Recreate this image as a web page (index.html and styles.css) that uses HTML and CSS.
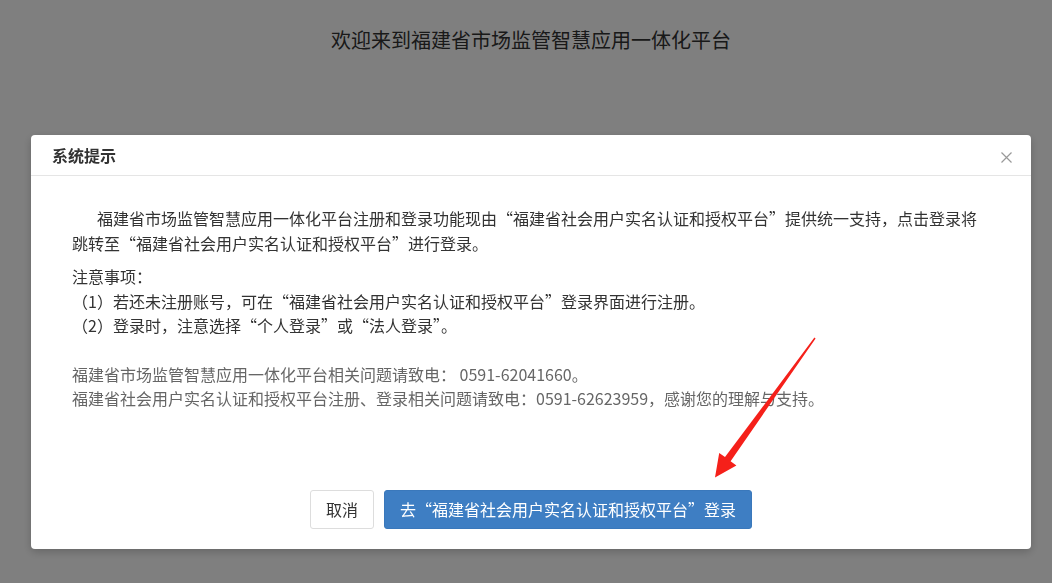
FILE: index.html
```html
<!DOCTYPE html>
<html lang="zh-CN">

<head>
  <meta charset="UTF-8">
  <meta name="viewport" content="width=device-width, initial-scale=1.0">
  <title>福建省市场监管智慧应用一体化平台</title>
  <link rel="stylesheet" href="styles.css">
</head>

<body>
  <div class="page">
    <h1 class="welcome">欢迎来到福建省市场监管智慧应用一体化平台</h1>
  </div>

  <div class="mask">
    <div class="dialog">
      <div class="dialogHead">
        <span class="dialogTitle">系统提示</span>
        <button class="closeBtn" aria-label="关闭">
          <svg width="11" height="11" viewBox="0 0 11 11">
            <path d="M0.5 0.5 L10.5 10.5 M10.5 0.5 L0.5 10.5" stroke="#999" stroke-width="1.2" fill="none" />
          </svg>
        </button>
      </div>
      <div class="dialogBody">
        <p class="intro">福建省市场监管智慧应用一体化平台注册和登录功能现由“福建省社会用户实名认证和授权平台”提供统一支持，点击登录将跳转至“福建省社会用户实名认证和授权平台”进行登录。</p>
        <div class="notes">
          <div>注意事项：</div>
          <div>（1）若还未注册账号，可在“福建省社会用户实名认证和授权平台”登录界面进行注册。</div>
          <div>（2）登录时，注意选择“个人登录”或“法人登录”。</div>
        </div>
        <div class="contact">
          <div>福建省市场监管智慧应用一体化平台相关问题请致电： 0591-62041660。</div>
          <div>福建省社会用户实名认证和授权平台注册、登录相关问题请致电：0591-62623959，感谢您的理解与支持。</div>
        </div>
      </div>
      <div class="dialogFoot">
        <button class="btn btnCancel">取消</button>
        <button class="btn btnPrimary">去“福建省社会用户实名认证和授权平台”登录</button>
      </div>
    </div>
  </div>

  <!-- 标注箭头 -->
  <svg class="arrow" width="1052" height="583" viewBox="0 0 1052 583">
    <polygon points="815.6,338.4 730.6,461.2 736.4,465.4 715,477.5 719.2,452.9 725,457.1 814.4,337.6" fill="#f5201a" />
  </svg>
</body>

</html>
```

FILE: styles.css
```css
body {
  margin: 0;
  background-color: #fff;
  font-family: "Noto Sans CJK SC", "Noto Sans", sans-serif;
  color: #333;
}

.page {
  width: 1000px;
  padding-left: 31px;
  padding-top: 25px;
}

.welcome {
  margin: 0;
  font-size: 20px;
  font-weight: 400;
  line-height: 30px;
  text-align: center;
  color: #333;
}

.mask {
  position: fixed;
  top: 0;
  left: 0;
  width: 100%;
  height: 100%;
  background: rgba(0, 0, 0, 0.5);
}

.dialog {
  width: 1000px;
  margin: 135px 0 0 31px;
  background: #fff;
  border-radius: 4px;
  box-shadow: 0 3px 9px rgba(0, 0, 0, 0.2);
}

.dialogHead {
  height: 40px;
  padding: 0 19px 0 21px;
  display: flex;
  align-items: center;
  justify-content: space-between;
  border-bottom: 1px solid #e5e5e5;
}

.dialogTitle {
  font-size: 16px;
  font-weight: 700;
  color: #333;
}

.closeBtn {
  border: none;
  background: none;
  padding: 0;
  width: 11px;
  height: 11px;
  display: flex;
  margin-top: 4px;
  cursor: pointer;
}

.dialogBody {
  padding: 30px 41px 0 41px;
  font-size: 16px;
}

.intro {
  margin: 0;
  line-height: 25px;
  text-indent: 25px;
  color: #333;
}

.notes {
  margin-top: 8px;
  line-height: 24.5px;
  color: #333;
}

.contact {
  margin-top: 24px;
  line-height: 24px;
  color: #666;
}

.dialogFoot {
  padding: 80px 0 20px;
  display: flex;
  justify-content: center;
  gap: 10px;
}

.btn {
  height: 39px;
  padding: 0 15px;
  font-family: inherit;
  font-size: 16px;
  border-radius: 3px;
  cursor: pointer;
}

.btnCancel {
  background: #fff;
  border: 1px solid #ddd;
  color: #333;
}

.btnPrimary {
  background: #3e7ec3;
  border: 1px solid #3a78bb;
  color: #fff;
}

.arrow {
  position: absolute;
  top: 0;
  left: 0;
  pointer-events: none;
}
```
